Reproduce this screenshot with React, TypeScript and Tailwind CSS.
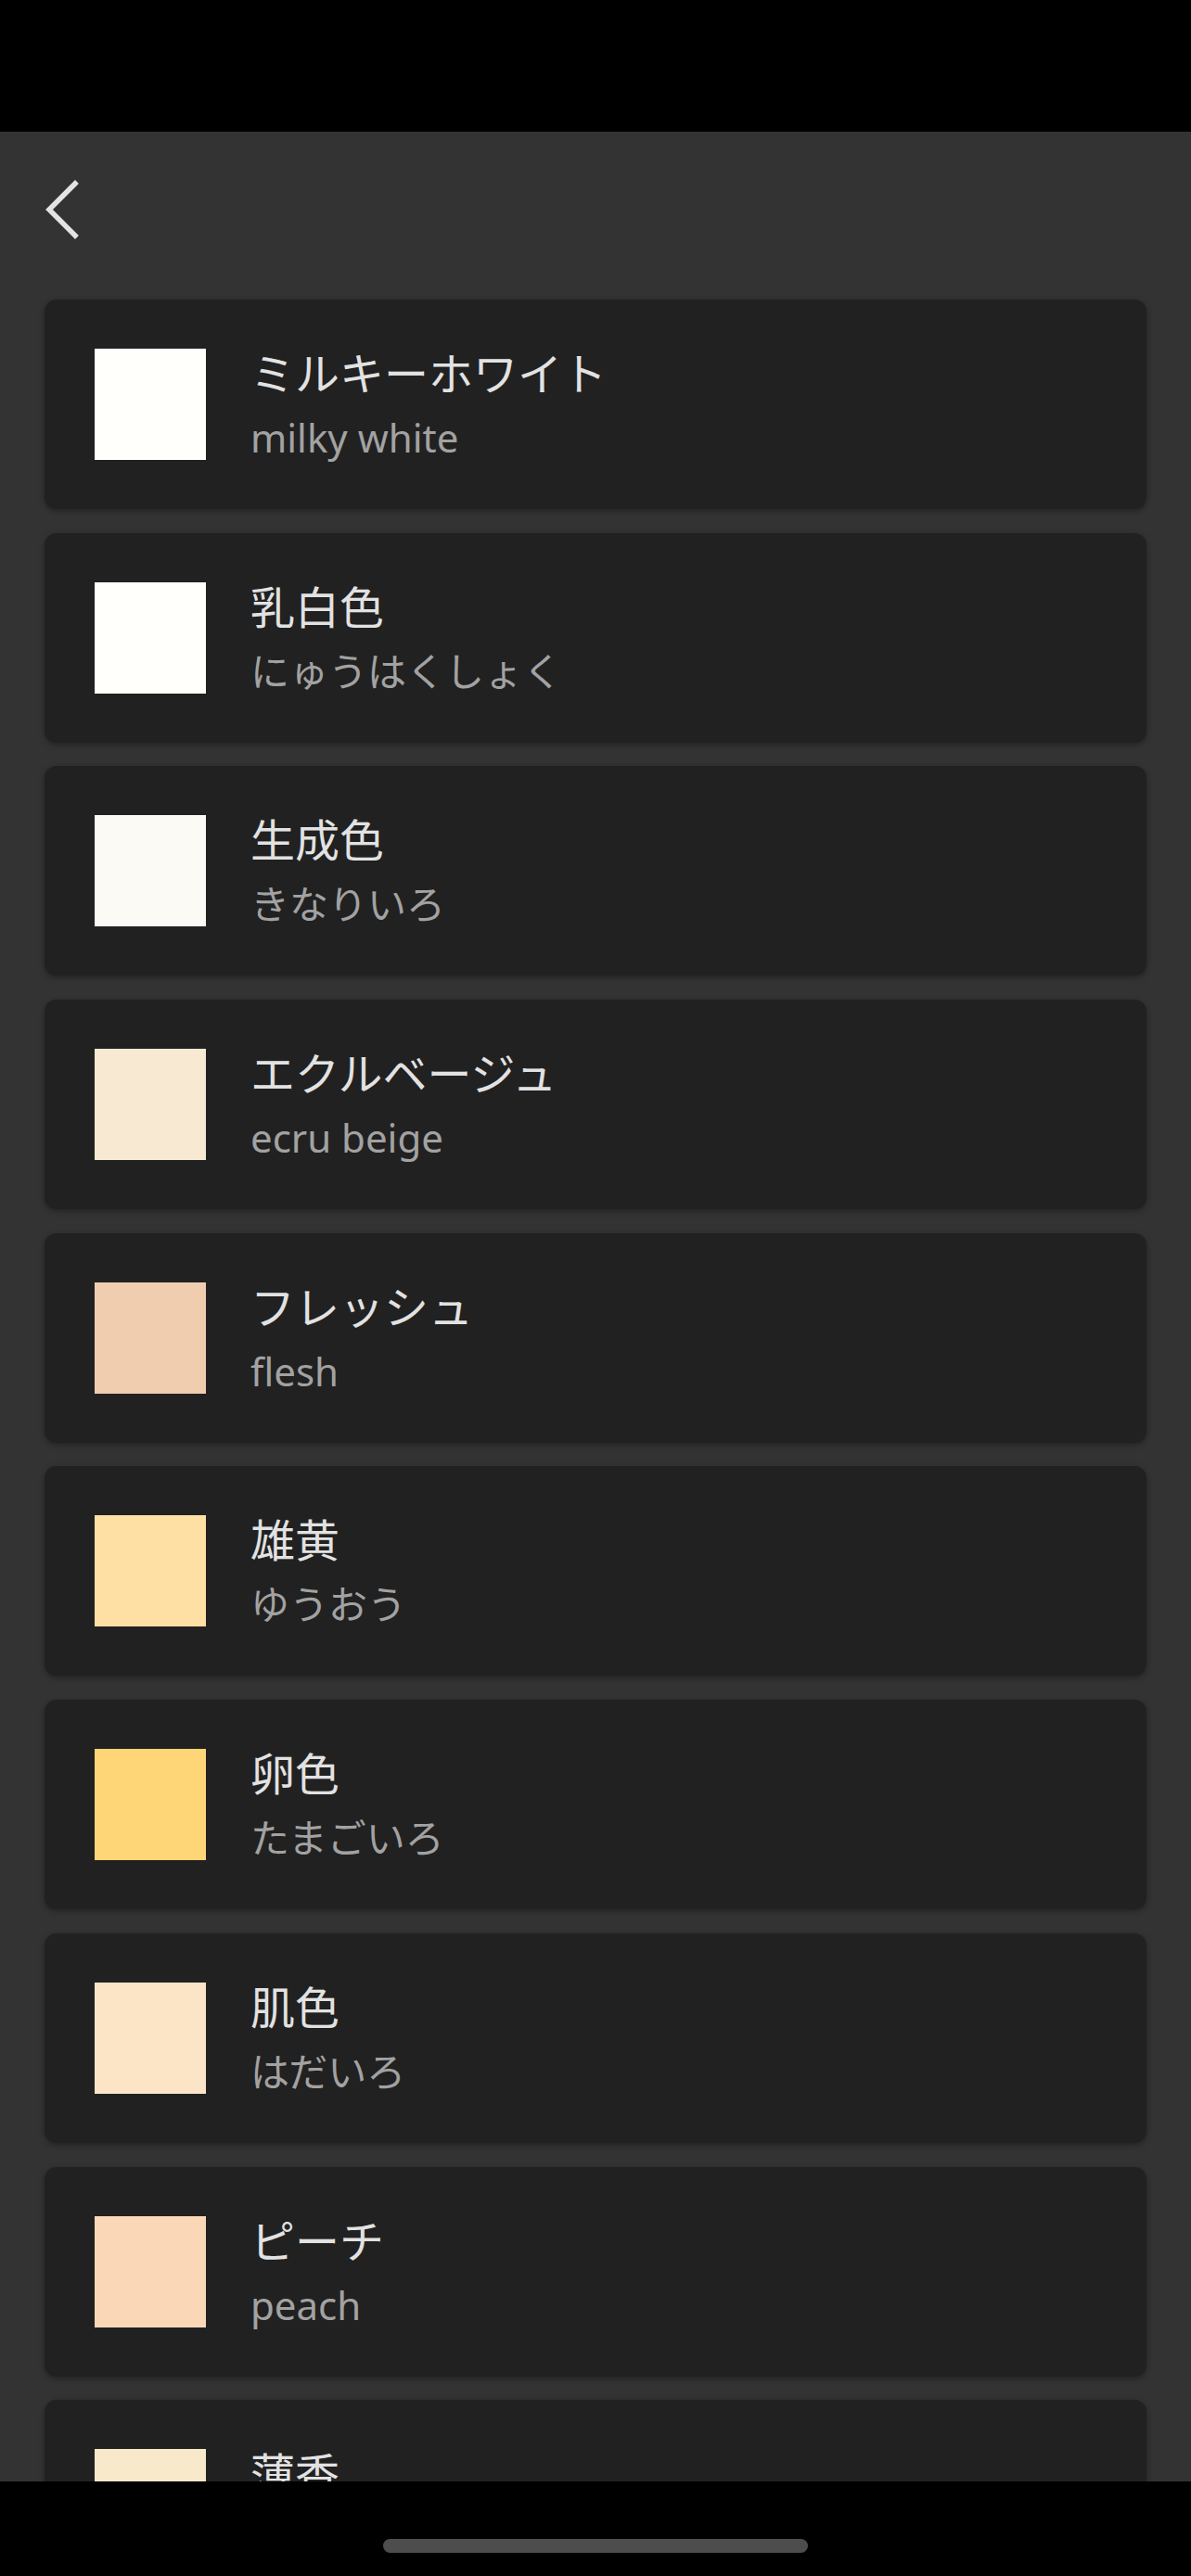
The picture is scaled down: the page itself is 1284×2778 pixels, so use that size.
import React from "react";

const colors: { title: string; sub: string; color: string }[] = [
  { title: "ミルキーホワイト", sub: "milky white", color: "#fffffb" },
  { title: "乳白色", sub: "にゅうはくしょく", color: "#fffffc" },
  { title: "生成色", sub: "きなりいろ", color: "#fbfaf5" },
  { title: "エクルベージュ", sub: "ecru beige", color: "#f7e9d2" },
  { title: "フレッシュ", sub: "flesh", color: "#f1cdb0" },
  { title: "雄黄", sub: "ゆうおう", color: "#fedfa4" },
  { title: "卵色", sub: "たまごいろ", color: "#fed677" },
  { title: "肌色", sub: "はだいろ", color: "#fce4c7" },
  { title: "ピーチ", sub: "peach", color: "#fad8b7" },
  { title: "薄香", sub: "うすこう", color: "#f7e9c9" },
];

export default function App() {
  return (
    <div
      className="w-[1284px] h-[2778px] flex flex-col overflow-hidden bg-[#333333]"
      style={{ fontFamily: '"Noto Sans", "Noto Sans CJK JP", sans-serif' }}
    >
      <div className="h-[142px] shrink-0 bg-black" />
      <div className="h-[168px] shrink-0 flex items-center pl-[46px]">
        <svg width="40" height="64" viewBox="0 0 40 64" fill="none">
          <path
            d="M35 4 L7 32 L35 60"
            stroke="#e4e4e4"
            strokeWidth="5.5"
            strokeLinecap="square"
            strokeLinejoin="miter"
          />
        </svg>
      </div>
      <div className="flex-1 overflow-hidden px-[48px] pt-[13px] flex flex-col gap-[25.7px]">
        {colors.map((c) => (
          <div
            key={c.title}
            className="h-[226px] shrink-0 rounded-[13px] bg-[#212121] shadow-[0_2px_6px_rgba(0,0,0,0.35)] flex items-center pl-[54px]"
          >
            <div className="w-[120px] h-[120px] shrink-0" style={{ backgroundColor: c.color }} />
            <div className="ml-[48px] flex flex-col">
              <div className="text-[48px] leading-[72px] text-[#e2e2e2]">{c.title}</div>
              <div className="text-[42px] leading-[66px] text-[#a2a2a2]">{c.sub}</div>
            </div>
          </div>
        ))}
      </div>
      <div className="h-[102px] shrink-0 bg-black flex justify-center pt-[62px]">
        <div className="w-[458px] h-[15px] rounded-full bg-[#4d4d4d]" />
      </div>
    </div>
  );
}
